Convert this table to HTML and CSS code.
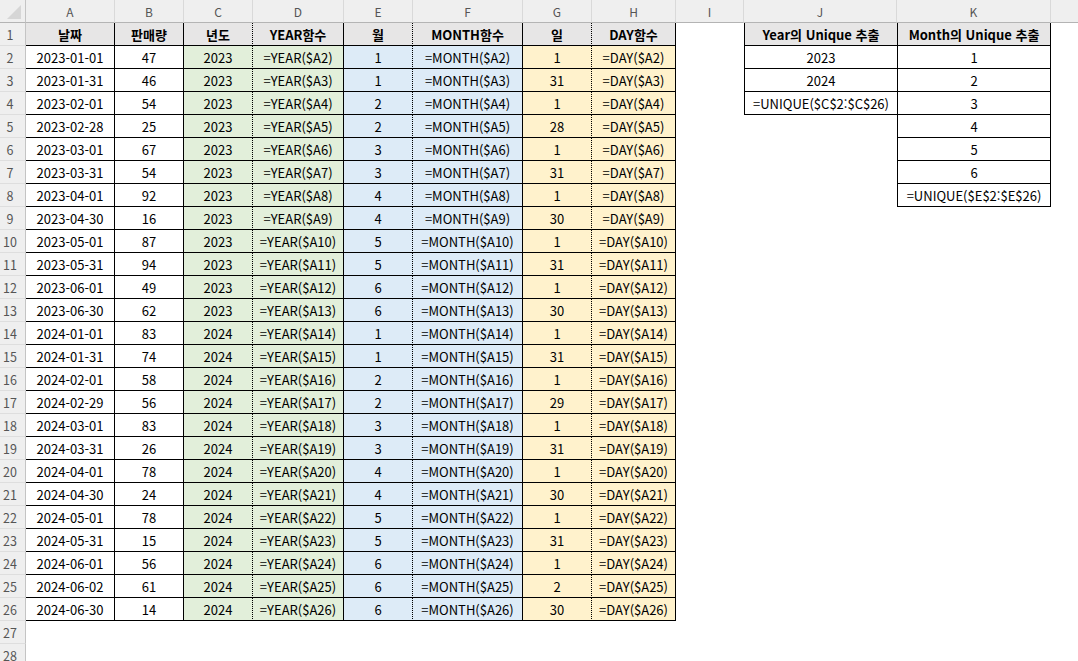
FILE: index.html
```html
<!DOCTYPE html>
<html lang="ko">
<head>
<meta charset="utf-8">
<link rel="stylesheet" href="styles.css">
</head>
<body>
<div class="sheet">
  <div class="row head">
    <div class="corner"><svg width="25" height="22" viewBox="0 0 25 22"><polygon points="21,5 21,19 7,19" fill="#d6d6d6"/></svg></div>
    <div class="ch">A</div><div class="ch">B</div><div class="ch">C</div><div class="ch">D</div><div class="ch">E</div><div class="ch">F</div><div class="ch">G</div><div class="ch">H</div><div class="ch">I</div><div class="ch">J</div><div class="ch">K</div><div class="ch last"></div>
  </div>
  <div class="row">
    <div class="rh">1</div><div class="t hd">날짜</div><div class="t hd">판매량</div><div class="t hd dot">년도</div><div class="t hd">YEAR함수</div><div class="t hd dot">월</div><div class="t hd">MONTH함수</div><div class="t hd dot">일</div><div class="t hd">DAY함수</div><div></div><div class="j hd">Year의 Unique 추출</div><div class="k hd">Month의 Unique 추출</div>
  </div>
  <div class="row">
    <div class="rh">2</div><div class="t">2023-01-01</div><div class="t">47</div><div class="t g dot">2023</div><div class="t g">=YEAR($A2)</div><div class="t b dot">1</div><div class="t b">=MONTH($A2)</div><div class="t y dot">1</div><div class="t y">=DAY($A2)</div><div></div><div class="j">2023</div><div class="k">1</div>
  </div>
  <div class="row">
    <div class="rh">3</div><div class="t">2023-01-31</div><div class="t">46</div><div class="t g dot">2023</div><div class="t g">=YEAR($A3)</div><div class="t b dot">1</div><div class="t b">=MONTH($A3)</div><div class="t y dot">31</div><div class="t y">=DAY($A3)</div><div></div><div class="j">2024</div><div class="k">2</div>
  </div>
  <div class="row">
    <div class="rh">4</div><div class="t">2023-02-01</div><div class="t">54</div><div class="t g dot">2023</div><div class="t g">=YEAR($A4)</div><div class="t b dot">2</div><div class="t b">=MONTH($A4)</div><div class="t y dot">1</div><div class="t y">=DAY($A4)</div><div></div><div class="j">=UNIQUE($C$2:$C$26)</div><div class="k">3</div>
  </div>
  <div class="row">
    <div class="rh">5</div><div class="t">2023-02-28</div><div class="t">25</div><div class="t g dot">2023</div><div class="t g">=YEAR($A5)</div><div class="t b dot">2</div><div class="t b">=MONTH($A5)</div><div class="t y dot">28</div><div class="t y">=DAY($A5)</div><div></div><div></div><div class="k">4</div>
  </div>
  <div class="row">
    <div class="rh">6</div><div class="t">2023-03-01</div><div class="t">67</div><div class="t g dot">2023</div><div class="t g">=YEAR($A6)</div><div class="t b dot">3</div><div class="t b">=MONTH($A6)</div><div class="t y dot">1</div><div class="t y">=DAY($A6)</div><div></div><div></div><div class="k">5</div>
  </div>
  <div class="row">
    <div class="rh">7</div><div class="t">2023-03-31</div><div class="t">54</div><div class="t g dot">2023</div><div class="t g">=YEAR($A7)</div><div class="t b dot">3</div><div class="t b">=MONTH($A7)</div><div class="t y dot">31</div><div class="t y">=DAY($A7)</div><div></div><div></div><div class="k">6</div>
  </div>
  <div class="row">
    <div class="rh">8</div><div class="t">2023-04-01</div><div class="t">92</div><div class="t g dot">2023</div><div class="t g">=YEAR($A8)</div><div class="t b dot">4</div><div class="t b">=MONTH($A8)</div><div class="t y dot">1</div><div class="t y">=DAY($A8)</div><div></div><div></div><div class="k">=UNIQUE($E$2:$E$26)</div>
  </div>
  <div class="row">
    <div class="rh">9</div><div class="t">2023-04-30</div><div class="t">16</div><div class="t g dot">2023</div><div class="t g">=YEAR($A9)</div><div class="t b dot">4</div><div class="t b">=MONTH($A9)</div><div class="t y dot">30</div><div class="t y">=DAY($A9)</div>
  </div>
  <div class="row">
    <div class="rh">10</div><div class="t">2023-05-01</div><div class="t">87</div><div class="t g dot">2023</div><div class="t g">=YEAR($A10)</div><div class="t b dot">5</div><div class="t b">=MONTH($A10)</div><div class="t y dot">1</div><div class="t y">=DAY($A10)</div>
  </div>
  <div class="row">
    <div class="rh">11</div><div class="t">2023-05-31</div><div class="t">94</div><div class="t g dot">2023</div><div class="t g">=YEAR($A11)</div><div class="t b dot">5</div><div class="t b">=MONTH($A11)</div><div class="t y dot">31</div><div class="t y">=DAY($A11)</div>
  </div>
  <div class="row">
    <div class="rh">12</div><div class="t">2023-06-01</div><div class="t">49</div><div class="t g dot">2023</div><div class="t g">=YEAR($A12)</div><div class="t b dot">6</div><div class="t b">=MONTH($A12)</div><div class="t y dot">1</div><div class="t y">=DAY($A12)</div>
  </div>
  <div class="row">
    <div class="rh">13</div><div class="t">2023-06-30</div><div class="t">62</div><div class="t g dot">2023</div><div class="t g">=YEAR($A13)</div><div class="t b dot">6</div><div class="t b">=MONTH($A13)</div><div class="t y dot">30</div><div class="t y">=DAY($A13)</div>
  </div>
  <div class="row">
    <div class="rh">14</div><div class="t">2024-01-01</div><div class="t">83</div><div class="t g dot">2024</div><div class="t g">=YEAR($A14)</div><div class="t b dot">1</div><div class="t b">=MONTH($A14)</div><div class="t y dot">1</div><div class="t y">=DAY($A14)</div>
  </div>
  <div class="row">
    <div class="rh">15</div><div class="t">2024-01-31</div><div class="t">74</div><div class="t g dot">2024</div><div class="t g">=YEAR($A15)</div><div class="t b dot">1</div><div class="t b">=MONTH($A15)</div><div class="t y dot">31</div><div class="t y">=DAY($A15)</div>
  </div>
  <div class="row">
    <div class="rh">16</div><div class="t">2024-02-01</div><div class="t">58</div><div class="t g dot">2024</div><div class="t g">=YEAR($A16)</div><div class="t b dot">2</div><div class="t b">=MONTH($A16)</div><div class="t y dot">1</div><div class="t y">=DAY($A16)</div>
  </div>
  <div class="row">
    <div class="rh">17</div><div class="t">2024-02-29</div><div class="t">56</div><div class="t g dot">2024</div><div class="t g">=YEAR($A17)</div><div class="t b dot">2</div><div class="t b">=MONTH($A17)</div><div class="t y dot">29</div><div class="t y">=DAY($A17)</div>
  </div>
  <div class="row">
    <div class="rh">18</div><div class="t">2024-03-01</div><div class="t">83</div><div class="t g dot">2024</div><div class="t g">=YEAR($A18)</div><div class="t b dot">3</div><div class="t b">=MONTH($A18)</div><div class="t y dot">1</div><div class="t y">=DAY($A18)</div>
  </div>
  <div class="row">
    <div class="rh">19</div><div class="t">2024-03-31</div><div class="t">26</div><div class="t g dot">2024</div><div class="t g">=YEAR($A19)</div><div class="t b dot">3</div><div class="t b">=MONTH($A19)</div><div class="t y dot">31</div><div class="t y">=DAY($A19)</div>
  </div>
  <div class="row">
    <div class="rh">20</div><div class="t">2024-04-01</div><div class="t">78</div><div class="t g dot">2024</div><div class="t g">=YEAR($A20)</div><div class="t b dot">4</div><div class="t b">=MONTH($A20)</div><div class="t y dot">1</div><div class="t y">=DAY($A20)</div>
  </div>
  <div class="row">
    <div class="rh">21</div><div class="t">2024-04-30</div><div class="t">24</div><div class="t g dot">2024</div><div class="t g">=YEAR($A21)</div><div class="t b dot">4</div><div class="t b">=MONTH($A21)</div><div class="t y dot">30</div><div class="t y">=DAY($A21)</div>
  </div>
  <div class="row">
    <div class="rh">22</div><div class="t">2024-05-01</div><div class="t">78</div><div class="t g dot">2024</div><div class="t g">=YEAR($A22)</div><div class="t b dot">5</div><div class="t b">=MONTH($A22)</div><div class="t y dot">1</div><div class="t y">=DAY($A22)</div>
  </div>
  <div class="row">
    <div class="rh">23</div><div class="t">2024-05-31</div><div class="t">15</div><div class="t g dot">2024</div><div class="t g">=YEAR($A23)</div><div class="t b dot">5</div><div class="t b">=MONTH($A23)</div><div class="t y dot">31</div><div class="t y">=DAY($A23)</div>
  </div>
  <div class="row">
    <div class="rh">24</div><div class="t">2024-06-01</div><div class="t">56</div><div class="t g dot">2024</div><div class="t g">=YEAR($A24)</div><div class="t b dot">6</div><div class="t b">=MONTH($A24)</div><div class="t y dot">1</div><div class="t y">=DAY($A24)</div>
  </div>
  <div class="row">
    <div class="rh">25</div><div class="t">2024-06-02</div><div class="t">61</div><div class="t g dot">2024</div><div class="t g">=YEAR($A25)</div><div class="t b dot">6</div><div class="t b">=MONTH($A25)</div><div class="t y dot">2</div><div class="t y">=DAY($A25)</div>
  </div>
  <div class="row">
    <div class="rh">26</div><div class="t">2024-06-30</div><div class="t">14</div><div class="t g dot">2024</div><div class="t g">=YEAR($A26)</div><div class="t b dot">6</div><div class="t b">=MONTH($A26)</div><div class="t y dot">30</div><div class="t y">=DAY($A26)</div>
  </div>
  <div class="row">
    <div class="rh">27</div>
  </div>
  <div class="row">
    <div class="rh">28</div>
  </div>
</div>
</body>
</html>
```

FILE: styles.css
```css
html, body {
  margin: 0;
  padding: 0;
  background: #ffffff;
  overflow: hidden;
}

.sheet {
  width: 1078px;
  height: 661px;
  overflow: hidden;
  font-family: "Noto Sans CJK KR", "Noto Sans", sans-serif;
  font-size: 13px;
  color: #000;
}

.row {
  display: grid;
  grid-template-columns: 26px 89px 69px 69px 91px 69px 110px 69px 84px 68px 153px 154px 1fr;
  height: 23px;
}

.row > div {
  box-sizing: border-box;
  display: flex;
  align-items: center;
  justify-content: center;
  white-space: nowrap;
  min-width: 0;
}

/* column header bar */
.head > div {
  background: #efefef;
  border-bottom: 1px solid #b4b4b4;
  border-right: 1px solid #d9d9d9;
  color: #555;
  font-size: 12px;
}

.head > .last {
  border-right: none;
}

.head > .corner {
  border-right: 1px solid #c4c4c4;
}

.corner svg {
  display: block;
}

/* row header */
.rh {
  background: #efefef;
  border-right: 1px solid #c4c4c4;
  border-bottom: 1px solid #dedede;
  color: #555;
  font-size: 12.5px;
  padding-right: 5px;
}

/* table cells */
.t {
  border-right: 1px solid #000;
  border-bottom: 1px solid #000;
}

.dot {
  border-right-style: dotted;
}

.hd {
  background: #e7e6e6;
  font-weight: 700;
}

.g {
  background: #e2efda;
}

.b {
  background: #ddebf7;
}

.y {
  background: #fff2cc;
}

.j {
  border-left: 1px solid #000;
  border-bottom: 1px solid #000;
}

.k {
  border-left: 1px solid #000;
  border-right: 1px solid #000;
  border-bottom: 1px solid #000;
}
```
